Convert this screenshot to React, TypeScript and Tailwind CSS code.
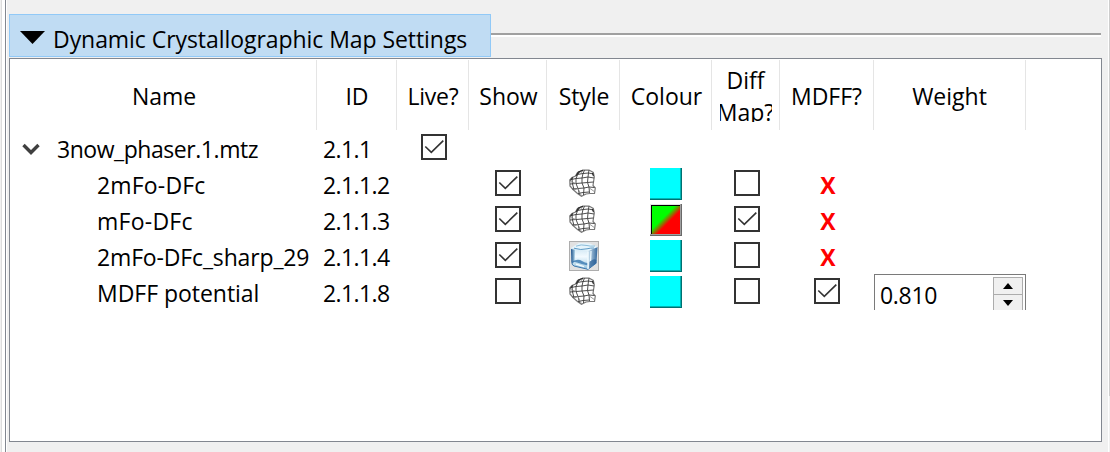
import React from "react";

function Check({ on }: { on?: boolean }) {
  return (
    <svg width="26" height="26" viewBox="0 0 26 26" fill="none" className="block">
      <rect x="1" y="1" width="24" height="24" fill="#fff" stroke="#333" strokeWidth="2" />
      {on && <path d="M4.3 12.5L10.3 18.4L22.3 6.6" stroke="#333" strokeWidth="1.6" />}
    </svg>
  );
}

function Mesh() {
  return (
    <svg width="30" height="30" viewBox="0 0 30 30" fill="none" stroke="#3a3a3a" strokeWidth="0.9" className="block">
      <path d="M.8 11L3 8.5L6.5 7L8.5 3.5L14 1.2L20 1L24.3 3.5L25.3 8L24.5 13L24 16.5L26.3 19L25.5 24.5L21 24.5L17 25L12.5 27.3L8.5 24.5L4 20.5L1 17Z" stroke="#777" strokeWidth="1.2" />
      <path d="M8 5.5L14 4.5L19.5 4L24.5 5M2.5 10.5L7 9.5L13 9L19 8L25 9M1 15L7 14.5L13 14L18.5 13.5L24.5 13M3.5 20L9 19.5L15 19L20 18L25.5 18.5M9 24.5L14 23.5L20 23" />
      <path d="M10.5 3L8.5 6L7 9.5L7 14.5L9 19.5L10.5 25.5M15.5 1.2L14 4.5L13 9L13 14L15 19L14.5 26M20 1.2L19.5 4L19 8L18.5 13.5L20 18L20.5 24M3 9.5L3.5 15L5 20.5" />
      <path d="M14 1.5L10 6M1.5 12.5L7 14.5M21 19.5L26 23M5 21L9 19.5L12.5 27" stroke="#8c8c8c" />
      <path d="M7 7L9.5 3L14 1.3M1.3 11.5L4 8.3M23.3 4L24.5 7" stroke="#2a2a2a" strokeWidth="1.1" />
    </svg>
  );
}

function Ice() {
  return (
    <svg width="30" height="30" viewBox="0 0 30 30" fill="none" className="block">
      <defs>
        <linearGradient id="iceFront" x1="0" y1="0" x2="0" y2="1">
          <stop offset="0" stopColor="#cfe6f3" />
          <stop offset=".4" stopColor="#f2faff" />
          <stop offset=".7" stopColor="#c5e0ef" />
          <stop offset="1" stopColor="#8fbfdd" />
        </linearGradient>
        <linearGradient id="iceRight" x1="0" y1="0" x2="1" y2="0">
          <stop offset="0" stopColor="#cfe4f1" />
          <stop offset="1" stopColor="#32679c" />
        </linearGradient>
        <linearGradient id="iceEdge" x1="0" y1="0" x2="1" y2="0">
          <stop offset="0" stopColor="#1d5089" />
          <stop offset="1" stopColor="#a8cfe5" />
        </linearGradient>
      </defs>
      <rect x=".5" y=".5" width="29" height="29" fill="#e1e1e1" stroke="#adadad" />
      <path d="M2 7L19 9.5L19 28.5L4 24.5L2.3 22Z" fill="url(#iceFront)" />
      <path d="M19 9.5L28.5 6L27.5 22L19 28.5Z" fill="url(#iceRight)" />
      <path d="M2 7L10 2L21 2.5L28.5 6L19 10Z" fill="#e4f4fc" />
      <path d="M2 8L6 8.8L5.6 20L3 23.5L2.3 21Z" fill="url(#iceEdge)" />
      <path d="M7 5.2Q12 3 18 4.5Q21 5.5 26 5" stroke="#8bbbd8" strokeWidth="1" />
      <path d="M5 7.2Q12 9.5 18 7.8Q22 6.8 25 7" stroke="#5d9ac5" strokeWidth="1" />
      <path d="M3 20.5Q9 17.5 13 20Q17 22.5 19 22L19 24.5Q12 23 8 21.5Q5 20.5 3 22Z" fill="#3878b0" fillOpacity=".8" />
      <path d="M2.8 23L5 25L19 28.3L27.4 22" stroke="#3a76ad" strokeWidth="1" />
      <path d="M20.5 21Q24 17 27.5 19L27.2 22L20 27Z" fill="#245b94" fillOpacity=".65" />
      <path d="M19 10.5V28" stroke="#eff9fe" strokeWidth="1.4" />
      <path d="M22 10L21.5 20" stroke="#e7f5fc" strokeWidth="1.3" />
      <path d="M7 23.2L15 25.7" stroke="#f3fbff" strokeWidth="1.3" />
    </svg>
  );
}

function Swatch({ split }: { split?: boolean }) {
  if (split)
    return (
      <div className="h-8 w-8 border-b border-r border-[#696969]">
        <div className="h-[31px] w-[31px] border-b border-r border-[#a0a0a0] bg-[#e3e3e3] pl-px pt-px">
          <div className="h-[29px] w-[29px] border-l border-t border-black bg-[linear-gradient(135deg,#00ff00_0%,#00ff00_41%,#ff0000_59%,#ff0000_100%)]" />
        </div>
      </div>
    );
  return (
    <div className="h-8 w-8 border-b border-r border-[#007070] bg-[#00ffff]">
      <div className="h-[31px] w-[31px] border-b border-r border-[#00b4b4]" />
    </div>
  );
}

const headers = [
  { label: "Name", cls: "w-[307px]", ls: "pl-[2px] tracking-[-0.1px]" },
  { label: "ID", cls: "w-20", ls: "pl-px" },
  { label: "Live?", cls: "w-[72px]", ls: "pl-px tracking-[-0.2px]" },
  { label: "Show", cls: "w-[78px]", ls: "pl-[2px]" },
  { label: "Style", cls: "w-[73px]", ls: "pl-[2px] tracking-[-0.1px]" },
  { label: "Colour", cls: "w-[92px]", ls: "pl-[2px]" },
  { label: "Diff", second: "Map?", cls: "w-[68px]", ls: "" },
  { label: "MDFF?", cls: "w-[94px]", ls: "" },
  { label: "Weight", cls: "w-[152px]", ls: "" },
];

const rows = [
  { name: "2mFo-DFc", ls: "tracking-[0.18px]", id: "2.1.1.2", show: true, diff: false },
  { name: "mFo-DFc", ls: "tracking-[0.25px]", id: "2.1.1.3", show: true, diff: true, split: true },
  { name: "2mFo-DFc_sharp_29", ls: "tracking-[-0.15px]", id: "2.1.1.4", show: true, diff: false, ice: true },
  { name: "MDFF potential", ls: "tracking-[-0.03px]", id: "2.1.1.8", show: false, diff: false, mdff: true },
];

function Spin() {
  return (
    <div className="flex h-9 w-[152px] justify-between border-x border-t border-[#7a7a7a] bg-white pl-[5px] pr-[2px] pt-[2px]">
      <span className="pt-[2px] leading-8 tracking-[-0.3px]">0.810</span>
      <div className="w-[30px] border-x border-t border-[#acacac] bg-[#f0f0f0]">
        <div className="flex h-[17px] items-center justify-center border-b border-[#acacac]">
          <svg width="10" height="6"><path d="M0 6L5 0L10 6Z" /></svg>
        </div>
        <div className="flex h-[15px] items-center justify-center">
          <svg width="10" height="6"><path d="M0 0L5 6L10 0Z" /></svg>
        </div>
      </div>
    </div>
  );
}

export default function App() {
  return (
    <div className="flex h-[452px] w-[1110px] overflow-hidden whitespace-nowrap bg-[#f0f0f0] font-['Open_Sans',sans-serif] text-[23px] text-black">
      <div className="flex w-[9px] shrink-0">
        <div className="w-px bg-[#f0f0f0]" />
        <div className="w-px bg-[#dcdcdc]" />
        <div className="w-[3px] bg-white" />
        <div className="w-px bg-[#828790]" />
        <div className="w-px bg-white" />
      </div>
      <main className="w-[1093px] shrink-0 pt-[14px]">
        <div className="flex h-11">
          <div className="flex h-[43px] w-[482px] shrink-0 border border-[#91c9f7] bg-[#c0dcf3] pl-[10px]">
            <svg width="26" height="14" className="mt-4 shrink-0"><path d="M0 0H25L12.5 13Z" /></svg>
            <span className="ml-[7px] pt-[8px] leading-8 tracking-[-0.06px]">Dynamic Crystallographic Map Settings</span>
          </div>
          <div className="mt-[19px] h-1 w-[610px] border-b-2 border-t-2 border-b-white border-t-[#a0a0a0]" />
        </div>
        <section className="h-[384px] border border-[#828790] bg-white">
          <div className="flex h-[71px] pt-px">
            {headers.map((h) => (
              <div key={h.label} className={`${h.cls} flex shrink-0 justify-center border-r border-[#e5e5e5]`}>
                {h.second ? (
                  <div className="flex h-[62px] w-[52px] flex-col items-center overflow-hidden pt-[4px] leading-8">
                    <span>{h.label}</span>
                    <span>{h.second}</span>
                  </div>
                ) : (
                  <span className={`pt-[20px] leading-8 ${h.ls}`}>{h.label}</span>
                )}
              </div>
            ))}
          </div>
          <div className="flex h-9">
            <div className="flex w-[307px] pl-[12px]">
              <svg width="18" height="13" className="mt-[13px] shrink-0" fill="none"><path d="M1.5 2L9 9.5L16.5 2" stroke="#404040" strokeWidth="3.4" /></svg>
              <span className="ml-[17px] pt-[3px] leading-8 tracking-[-0.45px]">3now_phaser.1.mtz</span>
            </div>
            <span className="w-20 pl-1.5 pt-[3px] leading-8 tracking-[-0.6px]">2.1.1</span>
            <div className="pl-6 pt-1"><Check on /></div>
          </div>
          {rows.map((r) => (
            <div key={r.id} className="flex h-9">
              <span className={`w-[307px] shrink-0 pl-[87px] pt-[3px] leading-8 ${r.ls}`}>{r.name}</span>
              <span className="w-[152px] shrink-0 pl-1.5 pt-[3px] leading-8 tracking-[-0.6px]">{r.id}</span>
              <div className="w-[78px] shrink-0 pl-[26px] pt-1"><Check on={r.show} /></div>
              <div className="w-[73px] shrink-0 pl-[22px] pt-[3px]">{r.ice ? <Ice /> : <Mesh />}</div>
              <div className="w-[92px] shrink-0 pl-[30px] pt-[2px]"><Swatch split={r.split} /></div>
              <div className="w-[68px] shrink-0 pl-[22px] pt-1"><Check on={r.diff} /></div>
              <div className="w-[94px] shrink-0">
                {r.mdff ? (
                  <div className="pl-[34px] pt-1"><Check on /></div>
                ) : (
                  <div className="pl-[2px] pt-[3px] text-center font-bold leading-8 text-[#ff0000]">X</div>
                )}
              </div>
              {r.mdff && <Spin />}
            </div>
          ))}
        </section>
      </main>
      <div className="flex w-2 shrink-0 justify-end">
        <div className="w-px bg-white" />
        <div className="h-[396px] w-px bg-[#cdcdcd]" />
      </div>
    </div>
  );
}
